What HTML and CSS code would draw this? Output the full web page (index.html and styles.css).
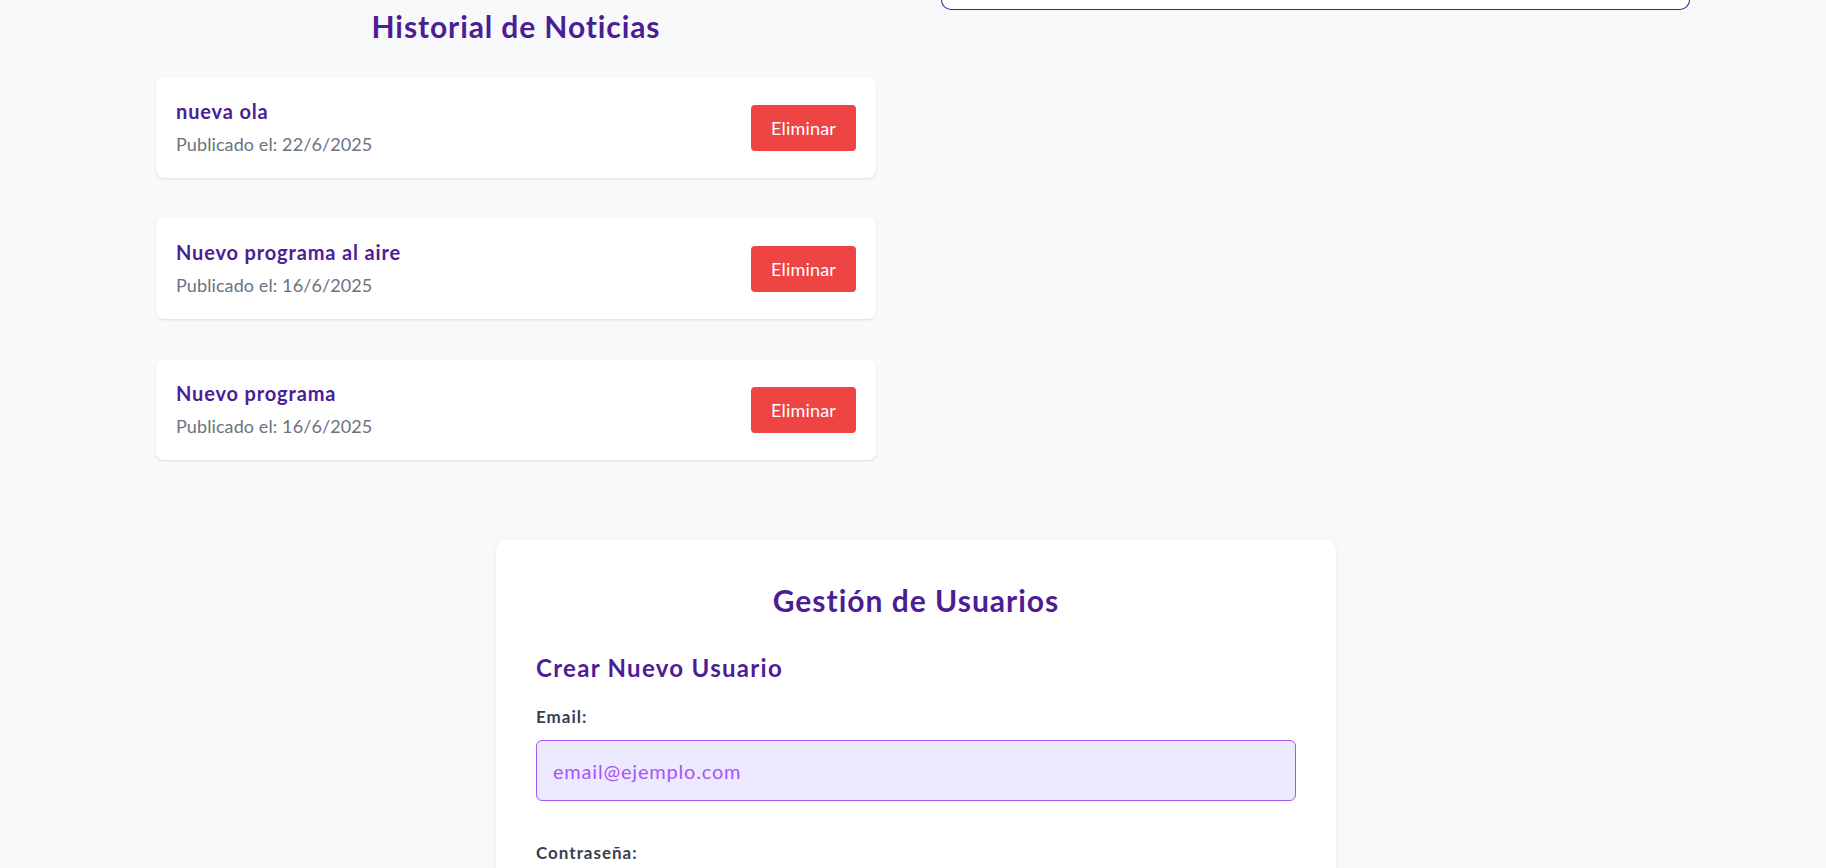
FILE: index.html
```html
<!DOCTYPE html>
<html lang="es">
<head>
<meta charset="utf-8">
<title>Panel de administración</title>
<link rel="stylesheet" href="styles.css">
</head>
<body>
<main class="page">
  <section class="top-grid">
    <div class="news-col">
      <h2 class="section-title">Historial de Noticias</h2>
      <ul class="news-list">
        <li class="news-card">
          <div class="news-info">
            <h3 class="news-title">nueva ola</h3>
            <p class="news-date">Publicado el: 22/6/2025</p>
          </div>
          <button class="btn-delete" type="button">Eliminar</button>
        </li>
        <li class="news-card">
          <div class="news-info">
            <h3 class="news-title">Nuevo programa al aire</h3>
            <p class="news-date">Publicado el: 16/6/2025</p>
          </div>
          <button class="btn-delete" type="button">Eliminar</button>
        </li>
        <li class="news-card">
          <div class="news-info">
            <h3 class="news-title">Nuevo programa</h3>
            <p class="news-date">Publicado el: 16/6/2025</p>
          </div>
          <button class="btn-delete" type="button">Eliminar</button>
        </li>
      </ul>
    </div>
    <div class="side-col">
      <div class="side-box"></div>
    </div>
  </section>

  <section class="users-card">
    <h2 class="users-title">Gestión de Usuarios</h2>
    <h3 class="form-title">Crear Nuevo Usuario</h3>
    <form class="user-form">
      <div class="field">
        <label class="field-label" for="email">Email:</label>
        <input class="field-input" id="email" type="email" placeholder="email@ejemplo.com">
      </div>
      <div class="field">
        <label class="field-label" for="pass">Contraseña:</label>
        <input class="field-input" id="pass" type="password" placeholder="••••••••">
      </div>
    </form>
  </section>
</main>
</body>
</html>
```

FILE: styles.css
```css
* { box-sizing: border-box; }

html, body {
  margin: 0;
  padding: 0;
  background: #f8f9fb;
  font-family: "Lato", "Open Sans", "Liberation Sans", sans-serif;
  color: #1f2937;
  overflow: hidden;
}

.page {
  display: flex;
  flex-direction: column;
}

.top-grid {
  display: flex;
  align-items: flex-start;
  padding-left: 156px;
  gap: 65px;
}

.news-col {
  width: 720px;
  padding-top: 8px;
}

.section-title {
  margin: 0 0 33px;
  text-align: center;
  font-size: 30px;
  line-height: 36px;
  font-weight: 700;
  color: #4c1d95;
  letter-spacing: 0.9px;
}

.news-list {
  list-style: none;
  margin: 0;
  padding: 0;
  display: flex;
  flex-direction: column;
  gap: 40px;
}

.news-card {
  display: flex;
  align-items: center;
  justify-content: space-between;
  background: #ffffff;
  border-radius: 8px;
  padding: 20px;
  box-shadow: 0 1px 3px rgba(0, 0, 0, 0.08), 0 1px 2px rgba(0, 0, 0, 0.04);
}

.news-title {
  margin: 0;
  font-size: 20px;
  line-height: 28px;
  font-weight: 700;
  color: #4c1d95;
  letter-spacing: 0.85px;
}

.news-date {
  margin: 5px 0 0;
  font-size: 18px;
  line-height: 28px;
  font-weight: 400;
  color: #6b7280;
  letter-spacing: 0.1px;
}

.btn-delete {
  width: 105px;
  height: 46px;
  border: none;
  border-radius: 4px;
  background: #ef4444;
  color: #ffffff;
  font-family: inherit;
  font-size: 18px;
  font-weight: 400;
  letter-spacing: 0.2px;
  cursor: pointer;
}

.side-col {
  width: 749px;
}

.side-box {
  height: 10px;
  background: #ffffff;
  border: 1px solid #4c1d95;
  border-top: none;
  border-radius: 0 0 10px 10px;
}

.users-card {
  width: 840px;
  margin: 80px 0 0 496px;
  background: #ffffff;
  border-radius: 10px;
  padding: 42px 40px 40px;
  box-shadow: 0 4px 10px rgba(0, 0, 0, 0.05), 0 1px 3px rgba(0, 0, 0, 0.04);
}

.users-title {
  margin: 0 0 34px;
  text-align: center;
  font-size: 30px;
  line-height: 36px;
  font-weight: 700;
  color: #4c1d95;
  letter-spacing: 1px;
}

.form-title {
  margin: 0 0 21px;
  font-size: 24px;
  line-height: 32px;
  font-weight: 700;
  color: #4c1d95;
  letter-spacing: 1.3px;
}

.user-form {
  display: flex;
  flex-direction: column;
  gap: 40px;
}

.field {
  display: flex;
  flex-direction: column;
}

.field-label {
  margin-bottom: 11px;
  font-size: 17px;
  line-height: 24px;
  font-weight: 700;
  color: #374151;
  letter-spacing: 1px;
}

.field-input {
  height: 61px;
  padding: 0 16px;
  border: 1px solid #a855f7;
  border-radius: 6px;
  background: #ede9fe;
  font-family: inherit;
  font-size: 20px;
  font-weight: 400;
  color: #4c1d95;
  letter-spacing: 0.8px;
  outline: none;
}

.field-input::placeholder {
  color: #a855f7;
  opacity: 1;
}
```
